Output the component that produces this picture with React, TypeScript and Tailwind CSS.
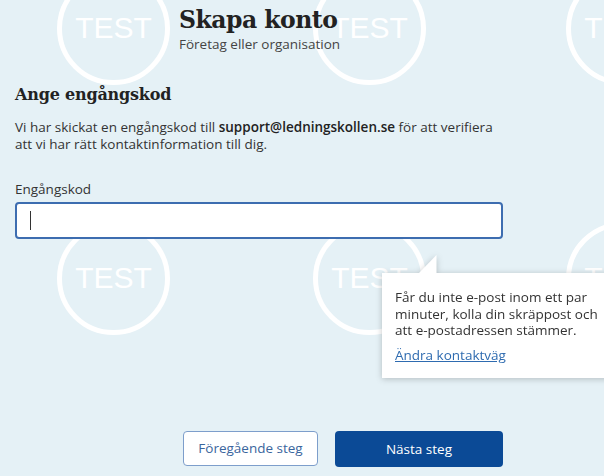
const watermarks = [
  { left: 57, top: -28 },
  { left: 313, top: -28 },
  { left: 566, top: -28 },
  { left: 57, top: 222 },
  { left: 313, top: 222 },
  { left: 566, top: 222 },
];

function Watermark({ left, top }: { left: number; top: number }) {
  return (
    <div
      className="absolute flex h-[113px] w-[113px] items-center justify-center rounded-full border-[5px] border-white"
      style={{ left, top }}
    >
      <span className="-mt-[2px] font-['Liberation_Sans',Arial,sans-serif] text-[30px] leading-none text-white">TEST</span>
    </div>
  );
}

export default function App() {
  return (
    <div className="relative min-h-[476px] overflow-hidden bg-[#e5f1f6] font-['Open_Sans',sans-serif] text-[#333]">
      {/* background watermark */}
      <div className="pointer-events-none absolute inset-0">
        {watermarks.map((w, i) => (
          <Watermark key={i} left={w.left} top={w.top} />
        ))}
      </div>

      <div className="relative px-[15px]">
        {/* Header */}
        <div className="pl-[164px] pt-[5px]">
          <h1 className="font-['DejaVu_Serif',serif] text-[23.5px] font-bold leading-[30px] tracking-[-0.5px] text-[#222]">
            Skapa konto
          </h1>
          <p className="text-[13.5px] leading-[18px] text-[#444]">Företag eller organisation</p>
        </div>

        <div className="w-[488px]">
          <h2 className="mt-[30px] font-['DejaVu_Serif',serif] text-[16px] font-bold leading-[24px] tracking-[-0.2px] text-[#222]">
            Ange engångskod
          </h2>
          <p className="mt-[12px] text-[13.5px] leading-[17px]">
            Vi har skickat en engångskod till <strong className="font-semibold text-[#222]">support@ledningskollen.se</strong> för att verifiera att vi har rätt kontaktinformation till dig.
          </p>

          <label className="mt-[28px] block text-[13.5px] leading-[17px]">Engångskod</label>
          <div className="mt-[4px] flex h-[37px] items-center rounded-[4px] border-2 border-[#3d6db0] bg-white px-[13px]">
            <span className="h-[19px] w-px bg-[#333]" />
          </div>

          {/* Actions */}
          <div className="mt-[192px] flex justify-end gap-[17px]">
            <button className="h-[35px] w-[135px] rounded-[4px] border border-[#7d9ecb] bg-white text-[13.5px] text-[#3a659d]">
              Föregående steg
            </button>
            <button className="h-[36px] w-[168px] rounded-[4px] bg-[#0b4a96] text-[13.5px] text-white">
              Nästa steg
            </button>
          </div>
        </div>
      </div>

      {/* Help popover */}
      <div className="absolute left-[382px] top-[255px] drop-shadow-[0_1px_3px_rgba(0,0,0,0.22)]">
        <svg className="ml-[36px] block" width="19" height="19" viewBox="0 0 19 19">
          <path d="M18.5 0 L18.5 19 L0 19 Z" fill="#fff" />
        </svg>
        <div className="-mt-px w-[236px] bg-white pb-[15px] pl-[13px] pr-[16px] pt-[16px] text-[13.5px] leading-[16.5px] text-[#333]">
          <p>Får du inte e-post inom ett par minuter, kolla din skräppost och att e-postadressen stämmer.</p>
          <a href="#" className="mt-[8px] block text-[#2e6bb0] underline">
            Ändra kontaktväg
          </a>
        </div>
      </div>
    </div>
  );
}
